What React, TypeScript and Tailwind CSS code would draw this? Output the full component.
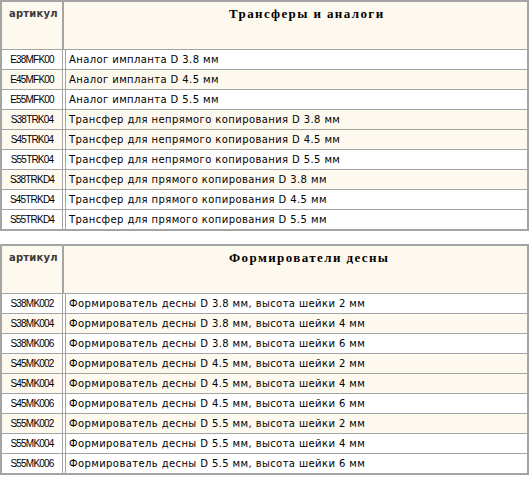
import React from "react";

type Row = { code: string; name: string; cream: boolean };

const t1: Row[] = [
  { code: "E38MFK00", name: "Аналог импланта D 3.8 мм", cream: false },
  { code: "E45MFK00", name: "Аналог импланта D 4.5 мм", cream: true },
  { code: "E55MFK00", name: "Аналог импланта D 5.5 мм", cream: false },
  { code: "S38TRK04", name: "Трансфер для непрямого копирования D 3.8 мм", cream: true },
  { code: "S45TRK04", name: "Трансфер для непрямого копирования D 4.5 мм", cream: true },
  { code: "S55TRK04", name: "Трансфер для непрямого копирования D 5.5 мм", cream: false },
  { code: "S38TRKD4", name: "Трансфер для прямого копирования D 3.8 мм", cream: true },
  { code: "S45TRKD4", name: "Трансфер для прямого копирования D 4.5 мм", cream: false },
  { code: "S55TRKD4", name: "Трансфер для прямого копирования D 5.5 мм", cream: false },
];

const t2: Row[] = [
  { code: "S38MK002", name: "Формирователь десны D 3.8 мм, высота шейки 2 мм", cream: false },
  { code: "S38MK004", name: "Формирователь десны D 3.8 мм, высота шейки 4 мм", cream: true },
  { code: "S38MK006", name: "Формирователь десны D 3.8 мм, высота шейки 6 мм", cream: false },
  { code: "S45MK002", name: "Формирователь десны D 4.5 мм, высота шейки 2 мм", cream: true },
  { code: "S45MK004", name: "Формирователь десны D 4.5 мм, высота шейки 4 мм", cream: true },
  { code: "S45MK006", name: "Формирователь десны D 4.5 мм, высота шейки 6 мм", cream: false },
  { code: "S55MK002", name: "Формирователь десны D 5.5 мм, высота шейки 2 мм", cream: true },
  { code: "S55MK004", name: "Формирователь десны D 5.5 мм, высота шейки 4 мм", cream: false },
  { code: "S55MK006", name: "Формирователь десны D 5.5 мм, высота шейки 6 мм", cream: false },
];

function Table({ title, rows }: { title: string; rows: Row[] }) {
  return (
    <div className="w-[529px] border-2 border-[#a4a4a4] bg-white">
      <div className="flex h-[47px] bg-[#fef9ee]">
        <div className="w-[62px] border-r-2 border-[#a4a4a4] pl-[7px] pt-[6px] text-[10px] font-bold leading-[12px] tracking-[0.2px] text-[#3a3a3a] [font-family:'DejaVu_Sans',sans-serif]">
          артикул
        </div>
        <div className="flex-1 pl-[165px] pt-[5px] text-[13px] font-bold leading-[14px] tracking-[1.4px] text-black [font-family:'Liberation_Serif',serif]">
          {title}
        </div>
      </div>
      {rows.map((r) => (
        <div key={r.code} className="flex h-[20px] border-t border-[#a4a4a4]">
          <div
            className={`w-[61px] border-r border-[#a4a4a4] pt-[4px] text-center text-[10px] leading-[11px] tracking-[-0.8px] text-black [font-family:'Liberation_Sans',sans-serif] ${
              r.cream ? "bg-[#fef9ee]" : "bg-white"
            }`}
          >
            {r.code}
          </div>
          <div
            className={`ml-[2px] flex-1 border-l border-[#a4a4a4] pl-[3px] pt-[4px] text-[10px] leading-[12px] tracking-[0.4px] text-black [font-family:'DejaVu_Sans',sans-serif] ${
              r.cream ? "bg-[#fef9ee]" : "bg-white"
            }`}
          >
            {r.name}
          </div>
        </div>
      ))}
    </div>
  );
}

export default function App() {
  return (
    <div className="flex w-[531px] flex-col gap-[13px] bg-white">
      <Table title="Трансферы и аналоги" rows={t1} />
      <Table title="Формирователи десны" rows={t2} />
    </div>
  );
}
